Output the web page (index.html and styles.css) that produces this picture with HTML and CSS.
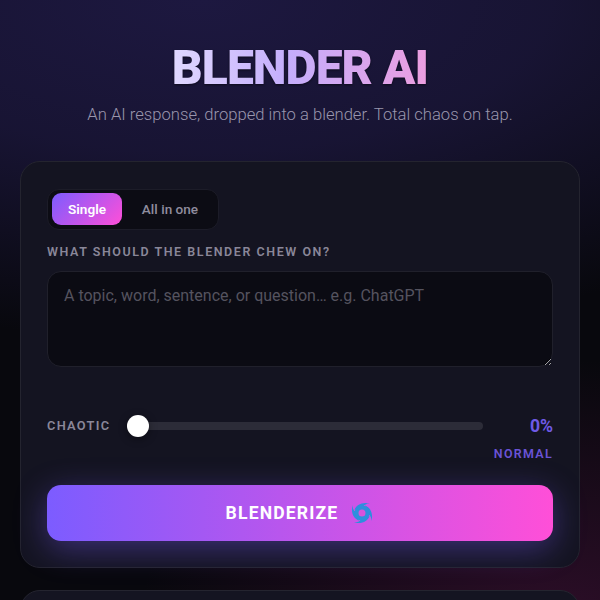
FILE: index.html
```html
<!DOCTYPE html>
<html lang="en">
<head>
<meta charset="utf-8">
<title>Blender AI</title>
<link rel="stylesheet" href="styles.css">
</head>
<body>
<div class="page">
  <header class="hero">
    <h1 class="title">BLENDER AI</h1>
    <p class="subtitle">An AI response, dropped into a blender. Total chaos on tap.</p>
  </header>
  <main class="card">
    <div class="toggle">
      <button class="tab tab-active">Single</button>
      <button class="tab">All in one</button>
    </div>
    <label class="field-label" for="prompt">WHAT SHOULD THE BLENDER CHEW ON?</label>
    <textarea class="prompt" id="prompt" placeholder="A topic, word, sentence, or question… e.g. ChatGPT"></textarea>
    <div class="slider-row">
      <span class="slider-label">CHAOTIC</span>
      <div class="track"><span class="thumb"></span></div>
      <span class="percent">0%</span>
    </div>
    <div class="mode">NORMAL</div>
    <button class="blend">
      <span>BLENDERIZE</span>
      <svg class="cyclone" viewBox="0 0 24 24" aria-hidden="true">
        <g fill="#2d8fdd">
          <path d="M4.500 9C6 4 12 .5 20 2.500c-4 0-6.500 1.500-7.500 4.500z"/>
          <path d="M4.500 9C6 4 12 .5 20 2.500c-4 0-6.500 1.500-7.500 4.500z" transform="rotate(90 12 12)"/>
          <path d="M4.500 9C6 4 12 .5 20 2.500c-4 0-6.500 1.500-7.500 4.500z" transform="rotate(180 12 12)"/>
          <path d="M4.500 9C6 4 12 .5 20 2.500c-4 0-6.500 1.500-7.500 4.500z" transform="rotate(270 12 12)"/>
        </g>
        <circle cx="12" cy="12" r="5.500" fill="#d653dc" stroke="#2d8fdd" stroke-width="4"/>
      </svg>
    </button>
  </main>
  <section class="card next-card"></section>
</div>
</body>
</html>
```
FILE: styles.css
```css
* { box-sizing: border-box; }
html, body { margin: 0; height: 100%; }
body {
  height: 600px;
  overflow: hidden;
  font-family: Roboto, "Liberation Sans", sans-serif;
  background:
    radial-gradient(ellipse 780px 340px at 200px 0, #1d1840 0%, rgba(29, 24, 64, 0.75) 45%, rgba(29, 24, 64, 0) 100%),
    radial-gradient(ellipse 420px 260px at 560px 620px, rgba(88, 20, 72, 0.45), rgba(88, 20, 72, 0) 100%),
    #08080d;
}
.page { padding: 0 20px; }
.hero { padding-top: 40px; text-align: center; height: 161px; }
.title {
  margin: 0;
  font-size: 48px;
  line-height: 56px;
  font-weight: 900;
  letter-spacing: -0.96px;
  background: linear-gradient(90deg, #e0d8ff 0%, #c4aefc 45%, #eb9ee0 100%);
  -webkit-background-clip: text;
  background-clip: text;
  color: transparent;
  display: inline-block;
  filter: drop-shadow(0 1px 1px rgba(0, 0, 0, 0.5));
}
.subtitle {
  margin: 7px 0 0;
  font-size: 16.64px;
  line-height: 24px;
  font-weight: 300;
  color: #9a96ad;
}
.card {
  background: #141421;
  border: 1px solid #24242f;
  border-radius: 20px;
  padding: 27px 26px 26px;
  height: 407px;
  display: flex;
  flex-direction: column;
  align-items: stretch;
}
.next-card { margin-top: 22px; height: 60px; }
.toggle {
  align-self: flex-start;
  display: flex;
  width: 172px;
  height: 41px;
  padding: 3px 4px 4px;
  gap: 4px;
  background: #0c0c14;
  border: 1px solid #1c1c28;
  border-radius: 12px;
}
.tab {
  border: 0;
  background: transparent;
  font: 500 13.6px Roboto, sans-serif;
  color: #8f8c9e;
  padding: 0;
  flex: 1;
  border-radius: 9px;
}
.tab-active {
  flex: 0 0 70px;
  font-weight: 600;
  color: #fff;
  background: linear-gradient(135deg, #7c5cff, #ff4fd8);
}
.field-label {
  margin-top: 14px;
  font-size: 12.48px;
  line-height: 16px;
  font-weight: 600;
  letter-spacing: 1.56px;
  color: #8a8799;
}
.prompt {
  display: block;
  margin-top: 11px;
  height: 96px;
  padding: 14px 16px;
  background: #0b0b13;
  border: 1px solid #20202b;
  border-radius: 14px;
  color: #fff;
  font: 400 16px/1.3 Roboto, sans-serif;
  outline: none;
}
.prompt::placeholder { color: #55535f; }
.slider-row {
  margin-top: 47px;
  display: flex;
  align-items: center;
  height: 24px;
}
.slider-label {
  width: 80px;
  margin-bottom: 2px;
  font-size: 12.8px;
  font-weight: 600;
  letter-spacing: 1.28px;
  color: #8a8799;
}
.track {
  position: relative;
  width: 356px;
  height: 8px;
  background: #2c2c38;
  border-radius: 4px;
}
.thumb {
  position: absolute;
  left: 0;
  top: -7px;
  width: 22px;
  height: 22px;
  border-radius: 50%;
  background: #fff;
  box-shadow: 0 2px 8px rgba(0, 0, 0, 0.4);
}
.percent {
  margin-left: auto;
  font-size: 17.6px;
  font-weight: 700;
  color: #6f5ae6;
}
.mode {
  margin-top: 9px;
  text-align: right;
  font-size: 12.48px;
  line-height: 14px;
  font-weight: 600;
  letter-spacing: 1.3px;
  color: #6a53d6;
}
.blend {
  margin-top: 24px;
  height: 56px;
  border: 0;
  border-radius: 14px;
  display: flex;
  align-items: center;
  justify-content: center;
  gap: 12px;
  background: linear-gradient(90deg, #7c5cff, #ff4fd8);
  box-shadow: 0 8px 32px rgba(124, 92, 255, 0.38);
  color: #fff;
  font: 700 17.6px Roboto, sans-serif;
  letter-spacing: 1.14px;
}
.cyclone { width: 24px; height: 24px; }
```
